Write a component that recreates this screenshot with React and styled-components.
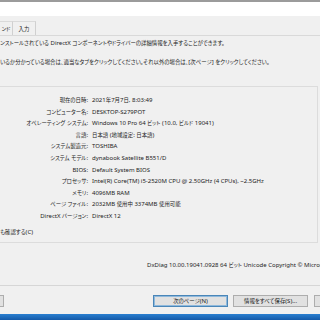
import React from 'react';
import styled, { createGlobalStyle } from 'styled-components';

const GlobalStyle = createGlobalStyle`
  html, body {
    margin: 0;
    padding: 0;
    width: 320px;
    height: 320px;
    overflow: hidden;
    background: #f0f0f0;
  }
  body {
    font-family: "Noto Sans", "Noto Sans CJK JP", sans-serif;
    font-size: 6px;
    font-feature-settings: "palt";
    color: #1c1c1c;
  }
`;

const Screen = styled.div`
  width: 320px;
  height: 320px;
  display: flex;
  flex-direction: column;
  overflow: hidden;
  white-space: nowrap;
`;

const TopEdge = styled.div`
  height: 2px;
  background: #9b9b9b;
`;

const TitleBand = styled.div`
  height: 14px;
  background: #ffffff;
`;

const Window = styled.div`
  flex: 1;
  display: flex;
  flex-direction: column;
  background: #f0f0f0;
`;

const TabStrip = styled.div`
  display: flex;
  height: 14px;
  margin-top: 5px;
`;

const Tab = styled.div`
  display: flex;
  align-items: center;
  justify-content: center;
  width: ${p => p.$w}px;
  border-top: 1px solid #dadada;
  border-right: 1px solid #d0d0d0;
  box-sizing: border-box;
`;

const TabPage = styled.div`
  border-top: 1px solid #d9d9d9;
  border-bottom: 1px solid #d6d6d6;
  height: 249px;
  display: flex;
  flex-direction: column;
`;

const Intro = styled.p`
  margin: ${p => p.$top}px 0 0 0;
  height: 12px;
  line-height: 12px;
`;

const GroupBox = styled.div`
  margin-top: 18px;
  border-top: 1px solid #dcdcdc;
  border-bottom: 1px solid #dcdcdc;
  border-right: 1px solid #dcdcdc;
  width: 318px;
  box-sizing: border-box;
  padding: 8px 0 4px 0;
`;

const InfoGrid = styled.div`
  display: grid;
  grid-template-columns: 88px auto;
  column-gap: 4px;
  grid-auto-rows: 11.6px;
  line-height: 11.6px;
`;

const Label = styled.span`
  text-align: right;
`;

const Value = styled.span``;

const CheckText = styled.div`
  margin-top: 3px;
  height: 12px;
  line-height: 12px;
`;

const Version = styled.div`
  margin: 16px 0 0 147px;
  height: 12px;
  line-height: 12px;
`;

const ButtonRow = styled.div`
  display: flex;
  margin-top: 9px;
  height: 12px;
`;

const Button = styled.div`
  width: ${p => p.$w}px;
  margin-left: ${p => p.$ml}px;
  flex-shrink: 0;
  box-sizing: border-box;
  display: flex;
  align-items: center;
  justify-content: center;
  background: #e1e1e1;
  border: 1px solid ${p => (p.$primary ? '#4a86b8' : '#adadad')};
  box-shadow: ${p => (p.$primary ? 'inset 0 0 0 1px #8fb9dc' : 'none')};
`;

const Taskbar = styled.div`
  margin-top: 7px;
  height: 6px;
  background: linear-gradient(#2a7fd0, #1459a8);
`;

// Japanese glyphs in Yu Gothic UI run narrower than Noto's, so CJK runs get a smaller size
const Jp = styled.span`
  font-size: 5.4px;
`;

const cjk = /([\u3000-\u30ff\u4e00-\u9fff\uff00-\uffef]+)/;

const T = ({ children }) =>
  String(children)
    .split(cjk)
    .map((part, i) => (i % 2 ? <Jp key={i}>{part}</Jp> : part));

const rows = [
  ['現在の日時:', '2021年7月7日, 8:03:49'],
  ['コンピューター名:', 'DESKTOP-S279POT'],
  ['オペレーティング システム:', 'Windows 10 Pro 64 ビット (10.0, ビルド 19041)'],
  ['言語:', '日本語 (地域設定: 日本語)'],
  ['システム製造元:', 'TOSHIBA'],
  ['システム モデル:', 'dynabook Satellite B551/D'],
  ['BIOS:', 'Default System BIOS'],
  ['プロセッサ:', 'Intel(R) Core(TM) i5-2520M CPU @ 2.50GHz (4 CPUs), ~2.5GHz'],
  ['メモリ:', '4096MB RAM'],
  ['ページ ファイル:', '2032MB 使用中 3374MB 使用可能'],
  ['DirectX バージョン:', 'DirectX 12'],
];

export default function App() {
  return (
    <Screen>
      <GlobalStyle />
      <TopEdge />
      <TitleBand />
      <Window>
        <TabStrip>
          <Tab $w={13}><T>ンド</T></Tab>
          <Tab $w={23}><T>入力</T></Tab>
        </TabStrip>
        <TabPage>
          <Intro $top={1}><T>ンストールされている DirectX コンポーネントやドライバーの詳細情報を入手することができます。</T></Intro>
          <Intro $top={7}><T>いるか分かっている場合は、適当なタブをクリックしてください。それ以外の場合は、[次ページ] をクリックしてください。</T></Intro>
          <GroupBox>
            <InfoGrid>
              {rows.map(([label, value]) => (
                <React.Fragment key={label}>
                  <Label><T>{label}</T></Label>
                  <Value><T>{value}</T></Value>
                </React.Fragment>
              ))}
            </InfoGrid>
            <CheckText><T>も確認する(C)</T></CheckText>
          </GroupBox>
          <Version><T>DxDiag 10.00.19041.0928 64 ビット Unicode  Copyright © Microsoft.</T></Version>
        </TabPage>
        <ButtonRow>
          <Button $w={80} $ml={-76}><T>ヘルプ(H)</T></Button>
          <Button $w={75} $ml={149} $primary><T>次のページ(N)</T></Button>
          <Button $w={75} $ml={5}><T>情報をすべて保存(S)...</T></Button>
          <Button $w={75} $ml={6}><T>終了(X)</T></Button>
        </ButtonRow>
        <Taskbar />
      </Window>
    </Screen>
  );
}
